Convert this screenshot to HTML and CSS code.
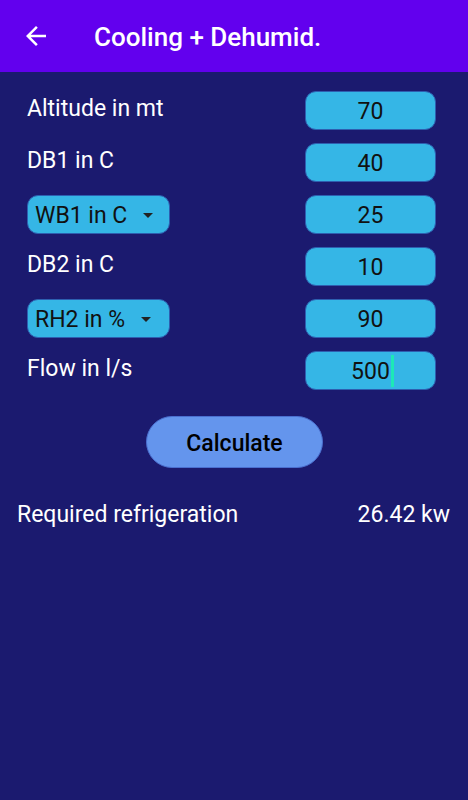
FILE: index.html
```html
<!DOCTYPE html>
<html lang="en">
<head>
<meta charset="utf-8">
<title>Cooling + Dehumid.</title>
<link rel="stylesheet" href="styles.css">
</head>
<body>
<header class="appbar">
  <svg class="back" viewBox="0 0 24 24" width="30" height="30" aria-hidden="true"><path d="M20 11H7.83l5.59-5.59L12 4l-8 8 8 8 1.41-1.41L7.83 13H20v-2z" fill="#fff"/></svg>
  <h1 class="title">Cooling + Dehumid.</h1>
</header>
<main class="content">
  <div class="form">
    <div class="row"><span class="label">Altitude in mt</span><div class="field">70</div></div>
    <div class="row"><span class="label">DB1 in C</span><div class="field">40</div></div>
    <div class="row"><div class="select">WB1 in C<span class="caret"></span></div><div class="field">25</div></div>
    <div class="row"><span class="label">DB2 in C</span><div class="field">10</div></div>
    <div class="row"><div class="select">RH2 in %<span class="caret"></span></div><div class="field">90</div></div>
    <div class="row"><span class="label">Flow in l/s</span><div class="field focused">500<span class="cursor"></span></div></div>
  </div>
  <div class="actions"><button class="calc">Calculate</button></div>
  <div class="result"><span>Required refrigeration</span><span>26.42 kw</span></div>
</main>
</body>
</html>
```

FILE: styles.css
```css
* { box-sizing: border-box; }
html, body { margin: 0; padding: 0; }
body {
  width: 468px;
  height: 800px;
  background: #1b1a6f;
  font-family: Roboto, "Noto Sans", sans-serif;
  color: #fff;
  overflow: hidden;
}
.appbar {
  height: 72px;
  background: #6200ee;
  display: flex;
  align-items: center;
  padding-left: 21px;
}
.back { display: block; margin-top: -1px; }
.title {
  margin: 2px 0 0 43px;
  font-size: 26px;
  font-weight: 500;
  color: #fff;
}
.content { padding: 19px 0 0 0; }
.form {
  display: flex;
  flex-direction: column;
  gap: 13px;
  padding: 0 32px 0 27px;
}
.row {
  display: flex;
  justify-content: space-between;
  align-items: flex-start;
  height: 39px;
}
.label {
  font-size: 23px;
  line-height: 26px;
  margin-top: 5px;
}
.field {
  width: 131px;
  height: 39px;
  background: #35b6e6;
  border: 1px solid #2d5fb0;
  border-radius: 11px;
  color: #111;
  font-size: 23px;
  display: flex;
  align-items: center;
  justify-content: center;
  padding-top: 1px;
}
.cursor {
  display: inline-block;
  width: 3px;
  height: 32px;
  background: #1de9b6;
  margin-left: 1px;
  margin-right: -4px;
}
.select {
  width: 143px;
  height: 39px;
  background: #35b6e6;
  border: 1px solid #2d5fb0;
  border-radius: 11px;
  color: #111;
  font-size: 23px;
  display: flex;
  align-items: center;
  padding-left: 7px;
  padding-top: 1px;
}
.caret {
  width: 0;
  height: 0;
  border-left: 5px solid transparent;
  border-right: 5px solid transparent;
  border-top: 5px solid #222;
  margin-left: 16px;
}
.actions {
  display: flex;
  justify-content: center;
  padding: 26px 0 0 0;
}
.calc {
  width: 177px;
  height: 52px;
  border-radius: 26px;
  background: #6495ed;
  border: 1px solid #4a6fd0;
  color: #000;
  font-family: Roboto, "Noto Sans", sans-serif;
  font-size: 23px;
  font-weight: 500;
  padding: 2px 0 0 0;
  margin-left: 1px;
}
.result {
  display: flex;
  justify-content: space-between;
  padding: 33px 18px 0 17px;
  font-size: 23px;
}
```
